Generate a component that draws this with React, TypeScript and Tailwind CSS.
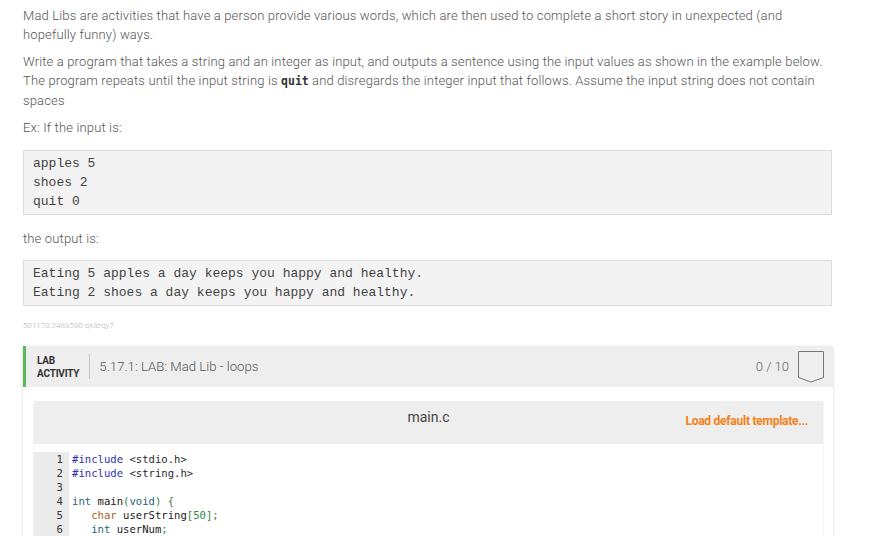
import { FC } from 'react'

const body = { fontFamily: 'Roboto, "Liberation Sans", sans-serif' }
const mono = { fontFamily: '"Liberation Mono", "Courier New", monospace' }
const codeFont = { fontFamily: '"DejaVu Sans Mono", monospace' }

type Tok = [string, string]

// 見える範囲のコード行
const code: Tok[][] = [
  [['#include', 'text-[#2f2fb0]'], [' <stdio.h>', 'text-[#2b2b2b]']],
  [['#include', 'text-[#2f2fb0]'], [' <string.h>', 'text-[#2b2b2b]']],
  [],
  [
    ['int', 'text-[#1f6377]'],
    [' main', 'text-[#222]'],
    ['(', 'text-[#3a7d3a]'],
    ['void', 'text-[#1f6377]'],
    [')', 'text-[#3a7d3a]'],
    [' {', 'text-[#3a7d3a]'],
  ],
  [
    ['   char', 'text-[#a6621f]'],
    [' userString', 'text-[#222]'],
    ['[', 'text-[#3a7d3a]'],
    ['50', 'text-[#2a8a4a]'],
    ['];', 'text-[#3a7d3a]'],
  ],
  [['   int', 'text-[#1f6377]'], [' userNum', 'text-[#222]'], [';', 'text-[#3a7d3a]']],
  [],
  [['   ', ''], ['/* Type your code here. */', 'text-[#6a6a6a]']],
]

const Pre: FC<{ lines: string[] }> = ({ lines }) => (
  <div
    className="w-[809px] border border-[#dcdcdc] bg-[#f3f3f3] px-[9px] py-[3px] text-[13px] leading-[19px] tracking-normal text-[#444]"
    style={mono}
  >
    {lines.map((l) => (
      <div key={l} className="whitespace-pre">
        {l}
      </div>
    ))}
  </div>
)

const Badge: FC = () => (
  <svg width="26" height="32" viewBox="0 0 26 32" className="block">
    <path d="M0.5 0.5 H25.5 V26.5 L13 31 L0.5 26.5 Z" fill="none" stroke="#777" strokeWidth="1" />
  </svg>
)

export default function App() {
  return (
    <div className="min-h-screen bg-white" style={body}>
      <div className="ml-[23px] pt-[6px] text-[13px] font-light leading-[19px] text-[#555]">
        <p className="w-[809px] tracking-[0.15px]">
          Mad Libs are activities that have a person provide various words, which are then used to complete a short
          story in unexpected (and hopefully funny) ways.
        </p>
        <p className="mt-[8px] w-[809px] tracking-[0.15px]">
          Write a program that takes a string and an integer as input, and outputs a sentence using the input values
          as shown in the example below. The program repeats until the input string is{' '}
          <span className="text-[11.5px] font-semibold tracking-normal text-[#333]" style={codeFont}>
            quit
          </span>{' '}
          and disregards the integer input that follows. Assume the input string does not contain spaces
        </p>
        <p className="mt-[8px] tracking-[0.15px]">Ex: If the input is:</p>
        <div className="mt-[13px]">
          <Pre lines={['apples 5', 'shoes 2', 'quit 0']} />
        </div>
        <p className="mt-[14px] tracking-[0.15px]">the output is:</p>
        <div className="mt-[12px]">
          <Pre
            lines={[
              'Eating 5 apples a day keeps you happy and healthy.',
              'Eating 2 shoes a day keeps you happy and healthy.',
            ]}
          />
        </div>
        <div className="mt-[14px] text-[8px] leading-[12px] text-[#b5b5b5]">501170.2483590.qx3zqy7</div>

        <div className="mt-[14px] w-[810px] bg-white font-normal shadow-[0_1px_3px_rgba(0,0,0,0.18)]">
          <div className="flex h-[41px] items-center border-l-[3px] border-[#5cb85c] bg-[#eeeeee] pl-[11px] pr-[9px]">
            <div className="text-[10px] font-bold leading-[13px] tracking-[-0.2px] text-[#333]">
              <div>LAB</div>
              <div>ACTIVITY</div>
            </div>
            <div className="ml-[10px] h-[25px] w-px bg-[#c8c8c8]" />
            <div className="ml-[9px] text-[13.2px] font-light text-[#555]">5.17.1: LAB: Mad Lib - loops</div>
            <div className="ml-auto mr-[9px] text-[13px] font-light text-[#666]">0 / 10</div>
            <Badge />
          </div>

          <div className="pb-[20px] pl-[11px] pr-[10px] pt-[14px]">
            <div className="bg-[#eeeeee] shadow-[0_1px_2px_rgba(0,0,0,0.12)]">
              <div className="relative flex h-[43px] items-start justify-center pt-[8px]">
                <span className="text-[14px] leading-[17px] text-[#444]">main.c</span>
                <span className="absolute right-[15px] top-[13px] text-[12px] font-bold leading-[14px] tracking-[-0.25px] text-[#f57f17]">
                  Load default template...
                </span>
              </div>
              <div className="flex bg-white pb-[8px] pt-[8px]" style={codeFont}>
                <div className="w-[35px] bg-[#ebebeb] pr-[6px] text-right text-[10.6px] leading-[14px] text-[#333]">
                  {code.map((_, i) => (
                    <div key={i}>{i + 1}</div>
                  ))}
                </div>
                <div className="pl-[3px] text-[10.6px] leading-[14px]">
                  {code.map((line, i) => (
                    <div key={i} className="h-[14px] whitespace-pre">
                      {line.map(([t, c], j) => (
                        <span key={j} className={c}>
                          {t}
                        </span>
                      ))}
                    </div>
                  ))}
                </div>
              </div>
            </div>
          </div>
        </div>
      </div>
    </div>
  )
}
